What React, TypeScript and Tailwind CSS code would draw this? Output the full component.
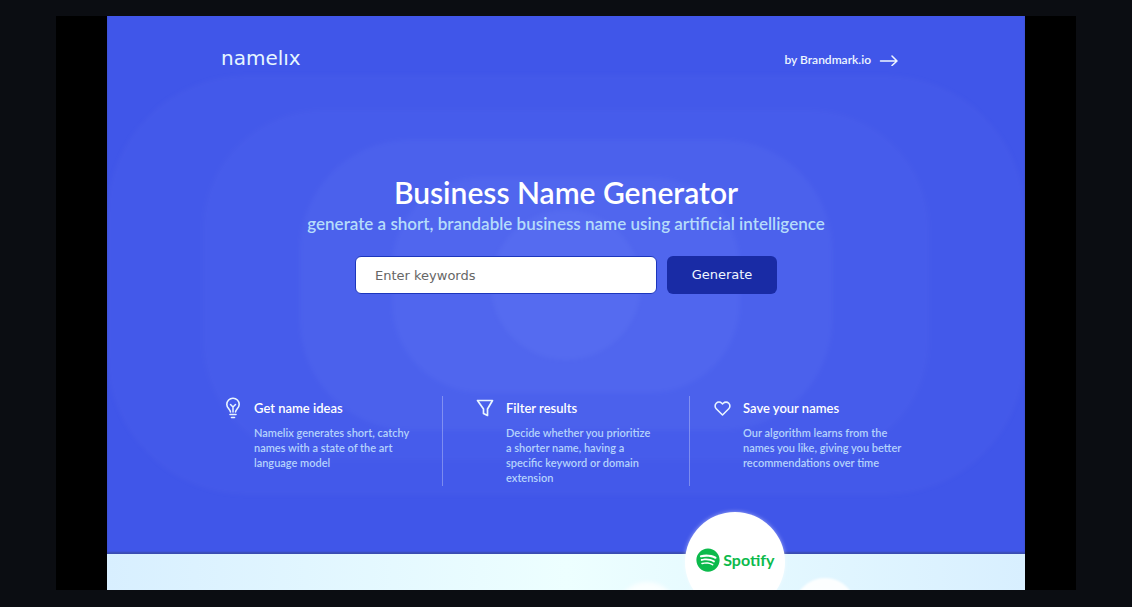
import { FaSpotify } from "react-icons/fa";

const features = [
  {
    title: "Get name ideas",
    desc: "Namelix generates short, catchy\nnames with a state of the art\nlanguage model",
    icon: <BulbIcon />,
    className: "pl-0.5",
  },
  {
    title: "Filter results",
    desc: "Decide whether you prioritize\na shorter name, having a\nspecific keyword or domain\nextension",
    icon: <FunnelIcon />,
    className: "pl-[33px] border-l border-white/30",
  },
  {
    title: "Save your names",
    desc: "Our algorithm learns from the\nnames you like, giving you better\nrecommendations over time",
    icon: <HeartIcon />,
    className: "pl-[23px] border-l border-white/30",
  },
];

export default function App() {
  return (
    <div className="min-h-screen bg-[#0b0d12] px-14 pt-4 pb-[17px] font-['Lato',sans-serif]">
      <div className="bg-black px-[51px]">
        <div className="relative overflow-hidden">
          <main className="relative isolate overflow-hidden bg-[#4056e9] pb-[68px] shadow-[inset_0_-2px_2px_#3a4cae]">
            <Rings />

            {/* Header */}
            <header className="flex items-start justify-between pt-7 pr-[126px] pl-[114px]">
              <a
                href="#"
                className="font-['DejaVu_Sans',sans-serif] text-[20px] leading-7 text-[#e6f6ff]"
              >
                namelıx
              </a>
              <a
                href="#"
                className="flex items-center gap-2 text-[12px] leading-8 font-semibold text-[#eef6ff]"
              >
                by Brandmark.io
                <ArrowIcon />
              </a>
            </header>

            {/* Search */}
            <section className="flex flex-col items-center pt-24 text-center">
              <h1 className="text-[30px] leading-10 font-semibold text-white">
                Business Name Generator
              </h1>
              <p className="text-[17px] leading-6 font-semibold text-[#b5dcfb]">
                generate a short, brandable business name using artificial
                intelligence
              </p>
              <form
                className="mt-5 flex gap-[10px] font-['DejaVu_Sans',sans-serif] text-[13px]"
                onSubmit={(e) => e.preventDefault()}
              >
                <input
                  type="text"
                  aria-label="Keywords"
                  placeholder="Enter keywords"
                  className="h-[38px] w-[302px] rounded-md border border-[#1c36bd] bg-white px-[19px] text-gray-800 placeholder:text-[#666]"
                />
                <button
                  type="submit"
                  className="h-[38px] w-[110px] rounded-md bg-[#192ba5] text-[#f0f6ff]"
                >
                  Generate
                </button>
              </form>
            </section>

            {/* Features */}
            <section className="mt-[102px] grid grid-cols-[220fr_247fr_226fr] pr-[110px] pl-[115px]">
              {features.map((f) => (
                <Feature key={f.title} {...f} />
              ))}
            </section>
          </main>

          {/* Brands */}
          <div className="h-9 bg-gradient-to-r from-[#d8efff] via-[#edffff] to-[#d8efff]" />
          <div className="absolute -bottom-[22px] left-[63%] flex size-[100px] items-center justify-center gap-[3px] rounded-full bg-white pb-1 text-[#0cba4c] shadow-[0_0_4px_#ffffff80]">
            <FaSpotify size={24} />
            <span className="text-[16px] leading-5 font-bold">Spotify</span>
          </div>
          <div className="absolute -bottom-[50px] left-[74.8%] size-[62px] rounded-full bg-white/90 blur-[1px]" />
          <div className="absolute -bottom-[54px] left-[55.5%] size-[62px] rounded-full bg-white/80 blur-[2px]" />
        </div>
      </div>
    </div>
  );
}

/* ---------------------------------- */
/* Components                         */
/* ---------------------------------- */

function Feature({
  title,
  desc,
  icon,
  className,
}: {
  title: string;
  desc: string;
  icon: React.ReactNode;
  className: string;
}) {
  return (
    <div className={`flex h-[90px] gap-3 ${className}`}>
      <div className="flex h-6 w-[18px] shrink-0 items-center justify-center">
        {icon}
      </div>
      <div>
        <h2 className="text-[13px] leading-6 font-semibold text-white">
          {title}
        </h2>
        <p className="mt-[5px] text-[11px] leading-[15px] font-semibold whitespace-pre text-[#b4d2fc]">
          {desc}
        </p>
      </div>
    </div>
  );
}

function Rings() {
  return (
    <div className="absolute inset-0 -z-10 flex items-center justify-center blur-[2px]">
      <div className="absolute h-[420px] w-full rounded-[140px] bg-[#8ca0ff]/5" />
      <div className="absolute h-[350px] w-[79%] rounded-[120px] bg-[#8ca0ff]/5" />
      <div className="absolute h-[290px] w-[58%] rounded-[110px] bg-[#8ca0ff]/8" />
      <div className="absolute h-[216px] w-[38%] rounded-[90px] bg-[#8ca0ff]/8" />
      <div className="absolute size-[150px] rounded-full bg-[#8ca0ff]/10" />
    </div>
  );
}

function ArrowIcon() {
  return (
    <svg width="20" height="12" viewBox="0 0 20 12" fill="none" stroke="currentColor" strokeWidth="1.5" strokeLinecap="round" strokeLinejoin="round">
      <path d="M1.5 7h16M13 2l5 5-5 4.5" />
    </svg>
  );
}

function BulbIcon() {
  return (
    <svg width="18" height="22" viewBox="0 0 18 22" fill="none" stroke="#e9f5ff" strokeWidth="1.6" strokeLinecap="round" strokeLinejoin="round" className="shrink-0">
      <path d="M6.5 15c0-2.5-3.7-3.8-3.7-7.6A6.1 6.1 0 0 1 9 1.3a6.1 6.1 0 0 1 6.2 6.1c0 3.8-3.7 5.1-3.7 7.6" />
      <path d="M9 15v-5M6.5 7.5L9 10l2.5-2.5" strokeWidth="1.5" />
      <path d="M6 17.5h6M7.5 20.5h3" />
    </svg>
  );
}

function FunnelIcon() {
  return (
    <svg width="18" height="18" viewBox="0 0 18 18" fill="none" stroke="#e9f5ff" strokeWidth="1.7" strokeLinejoin="round" className="shrink-0">
      <path d="M1.5 1.5h15l-5 8.5v6.500l-4-2V10z" />
    </svg>
  );
}

function HeartIcon() {
  return (
    <svg width="17" height="17" viewBox="0 0 24 24" fill="none" stroke="#e9f5ff" strokeWidth="2.2" strokeLinecap="round" strokeLinejoin="round" className="shrink-0">
      <path d="M20.84 4.61a5.5 5.5 0 0 0-7.78 0L12 5.67l-1.06-1.06a5.5 5.5 0 0 0-7.78 7.78L12 21.23l8.84-8.84a5.5 5.5 0 0 0 0-7.78z" />
    </svg>
  );
}
